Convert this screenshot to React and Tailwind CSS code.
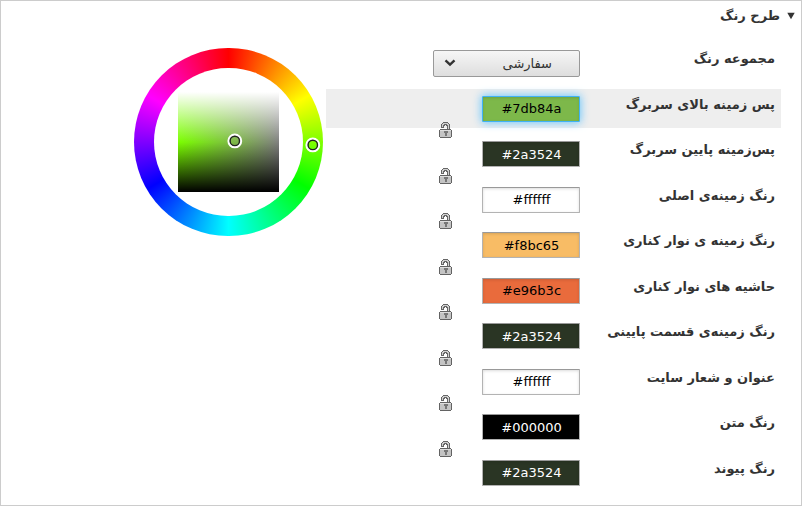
const rows = [
  { label: 'پس زمینه بالای سربرگ', value: '#7db84a', tone: 'bg-[#7db84a] text-black', active: true },
  { label: 'پس‌زمینه پایین سربرگ', value: '#2a3524', tone: 'bg-[#2a3524] text-white' },
  { label: 'رنگ زمینه‌ی اصلی', value: '#ffffff', tone: 'bg-white text-black' },
  { label: 'رنگ زمینه ی نوار کناری', value: '#f8bc65', tone: 'bg-[#f8bc65] text-black' },
  { label: 'حاشیه های نوار کناری', value: '#e96b3c', tone: 'bg-[#e96b3c] text-black' },
  { label: 'رنگ زمینه‌ی قسمت پایینی', value: '#2a3524', tone: 'bg-[#2a3524] text-white' },
  { label: 'عنوان و شعار سایت', value: '#ffffff', tone: 'bg-white text-black' },
  { label: 'رنگ متن', value: '#000000', tone: 'bg-black text-white' },
  { label: 'رنگ پیوند', value: '#2a3524', tone: 'bg-[#2a3524] text-white' },
];

function Lock() {
  return (
    <svg width="13" height="16" viewBox="0 0 13 16" className="block" shapeRendering="crispEdges">
      <path d="M4 0h5v1h1v1h1v5H8V4H7V3H6v1H5v2H2V2h1V1h1z" fill="#666" />
      <path d="M4 1h5v1h1v5H9V3H8V2H5v1H4v2H3V2h1z" fill="#d0d0d0" />
      <path d="M1 7h11v1h1v7h-1v1H1v-1H0V8h1z" fill="#636363" />
      <path d="M1 8h11v7H1z" fill="#c4c4c4" />
      <path d="M1 8h11v1H1z" fill="#dedede" />
      <path d="M5 9h4v2H8v3H6v-3H5z" fill="#777" />
    </svg>
  );
}

function ColorRow({ row, locked }) {
  return (
    <div className={`relative mb-[6.5px] flex h-[39px] items-start pr-[6px] pt-[6.9px] ${row.active ? 'bg-[#eee]' : ''}`}>
      <label className="w-[195px] text-[13px] leading-[17px] font-bold text-[#333] whitespace-nowrap">{row.label}</label>
      <div
        dir="ltr"
        className={`flex h-[26px] w-[98px] items-center justify-center rounded-[1px] border pl-px text-[13px] leading-[15px] ${row.tone} ${
          row.active
            ? 'border-[#40b2f5] shadow-[0_0_8px_1px_#73c8fa,inset_0_1px_3px_rgba(0,0,0,0.12)]'
            : 'border-[#b3b3b3] border-t-[#999] shadow-[inset_0_1px_3px_rgba(0,0,0,0.14)]'
        }`}
      >
        {row.value}
      </div>
      {locked && (
        <div className="absolute left-[113px] top-[33.1px]">
          <Lock />
        </div>
      )}
    </div>
  );
}

function Marker({ className }) {
  return (
    <svg width="16" height="16" viewBox="0 0 16 16" className={`absolute ${className}`}>
      <circle cx="7.8" cy="7.9" r="6.3" fill="none" stroke="#fff" strokeWidth="2.2" />
      <circle cx="7.8" cy="7.9" r="4.7" fill="none" stroke="#222" strokeWidth="1.4" />
    </svg>
  );
}

function ColorWheel() {
  return (
    <div className="relative flex h-[188px] w-[189px] items-center justify-center rounded-full bg-[conic-gradient(#f00,#ff0,#0f0,#0ff,#00f,#f0f,#f00)]">
      <div className="flex h-[148px] w-[149px] items-center justify-center rounded-full bg-white">
        <div className="h-[100px] w-[101px] bg-[#7bff00] bg-[linear-gradient(#fff,#fff0_50%,#0000_50%,#000),linear-gradient(to_right,#80808000,#808080)]" />
      </div>
      <Marker className="left-[93px] top-[85px]" />
      <Marker className="left-[171px] top-[89px]" />
    </div>
  );
}

export default function App() {
  return (
    <div dir="rtl" className="h-[506px] w-[802px] overflow-hidden border border-[#ccc] bg-white font-['DejaVu_Sans',sans-serif] text-[#333]">
      <div className="flex h-[47px] items-start pr-[6px] pt-[6px]">
        <svg width="8" height="8" viewBox="0 0 8 8" className="mt-[5px] block">
          <path d="M.3 .8H7.7L4 7.2Z" fill="#333" />
        </svg>
        <h2 className="mr-[7px] text-[13px] leading-[17px] font-bold">طرح رنگ</h2>
      </div>
      <div className="flex items-start pr-[20px]">
        <div className="w-[455px]">
          <div className="flex h-[41px] items-start pr-[6px] pt-[2px]">
            <span className="w-[195px] text-[13px] leading-[17px] font-bold">مجموعه رنگ</span>
            <div className="flex h-[27px] w-[147px] items-center rounded-[2px] border border-[#999] bg-linear-to-b from-[#f6f6f6] to-[#dedede]">
              <span className="flex-1 pr-[27px] text-[13px] leading-[17px]">سفارشی</span>
              <svg width="12" height="8" viewBox="0 0 12 8" className="mb-px ml-[10px]">
                <path d="M1.5 1.4L6 5.6L10.5 1.4" fill="none" stroke="#333" strokeWidth="2.4" />
              </svg>
            </div>
          </div>
          {rows.map((row, i) => (
            <ColorRow key={row.label} row={row} locked={i < rows.length - 1} />
          ))}
        </div>
        <div className="mr-[3px]">
          <ColorWheel />
        </div>
      </div>
    </div>
  );
}
